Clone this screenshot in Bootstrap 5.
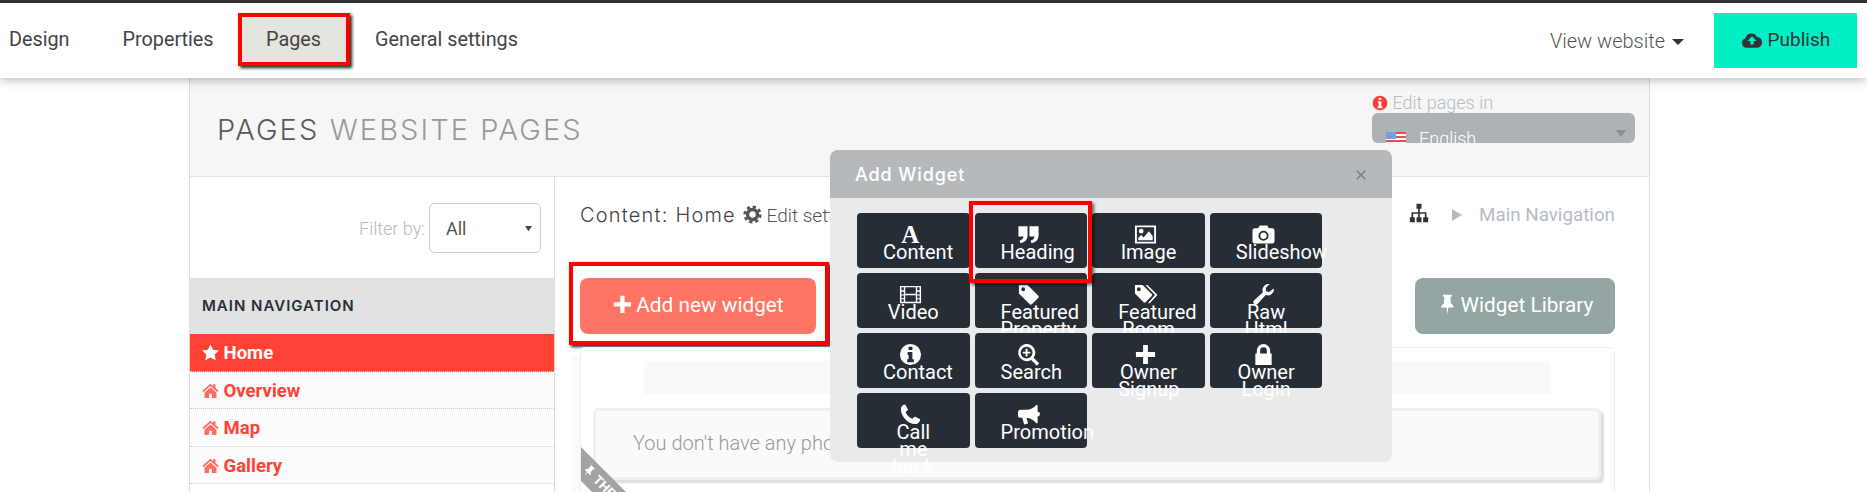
<!DOCTYPE html>
<html lang="en">

<head>
    <meta charset="UTF-8">
    <meta name="viewport" content="width=device-width, initial-scale=1.0">
    <title>Pages</title>
    <link href="https://cdn.jsdelivr.net/npm/bootstrap@5.3.0/dist/css/bootstrap.min.css" rel="stylesheet">
    <style>
        html, body { height: 492px; overflow: hidden; }
        body { font-family: Roboto, sans-serif; background: #fff; color: #444; position: relative; }
        .ico { width: 1em; height: 1em; fill: currentColor; vertical-align: -0.125em; }

        /* top bar */
        .topbar { height: 78px; border-top: 3px solid #333; background: #fff; box-shadow: 0 2px 10px rgba(0,0,0,.28); position: relative; z-index: 5; }
        .topbar .nav-link { color: #444; font-size: 19.8px; padding: 0 26.5px; line-height: 53px; }
        .topbar .nav-item:first-child .nav-link { padding-left: 9px; }
        .topbar .nav-tabs-row { margin-top: 10px; }
        .topbar .nav-link.picked { background: #e5e4de; border: 4px solid #f00; line-height: 45px; padding: 0 24.5px; box-shadow: 2px 2px 3px #222; margin-left: -2.5px; margin-right: -1px; }
        .view-link { color: #555; font-size: 20px; font-weight: 300; margin-right: 30px; }
        .view-link .tri { display: inline-block; border: 6px solid transparent; border-top-color: #333; border-bottom: 0; vertical-align: 3px; margin-left: 7px; }
        .publish { background: #00efc4; color: #333; font-size: 19px; width: 143px; height: 55px; margin-right: 10px; border: 0; border-radius: 0; }
        .publish .ico { font-size: 22px; vertical-align: -5px; }

        /* panel */
        .panel-wrap { margin-left: 189px; width: 1461px; border-left: 1px solid #ddd; border-right: 1px solid #ddd; height: 414px; }
        .panel-head { height: 99px; background: #f6f6f6; border-bottom: 1px solid #e6e6e6; padding-left: 27px; padding-right: 14px; }
        .panel-title { font-family: Inter, sans-serif; font-weight: 300; font-size: 29px; letter-spacing: 2.1px; color: #5a5a5a; margin: 0; padding-top: 35px; }
        .panel-title span { color: #999; }
        .lang-box { width: 263px; margin-top: 14px; }
        .lang-note { font-size: 18px; font-weight: 300; color: #b5bcc5; line-height: 21px; }
        .lang-note .ico { color: #ff3b30; font-size: 16px; }
        .lang-pick { height: 30px; background: #adb2b6; border-radius: 6px; overflow: hidden; color: #fff; font-weight: 300; font-size: 18px; padding: 15px 14px 0; line-height: 21px; position: relative; }
        .lang-pick svg { width: 20px; height: 14px; margin-right: 13px; vertical-align: -1px; }
        .lang-pick .tri { position: absolute; right: 9px; top: 17px; border: 5px solid transparent; border-top: 7px solid #8b8f92; border-bottom: 0; }

        /* sidebar */
        .side { width: 365px; border-right: 1px solid #ddd; flex: none; }
        .filter-row { padding: 26px 13px 25px 0; color: #b5bcc5; font-size: 18px; font-weight: 300; }
        .filter-row select { width: 112px; height: 50px; margin-left: 4px; font-size: 18px; color: #555; padding-left: 16px; border-color: #ccc; font-family: Roboto, sans-serif;
            background-image: url("data:image/svg+xml,%3csvg xmlns='http://www.w3.org/2000/svg' viewBox='0 0 8 8'%3e%3cpath fill='%23444' d='M0 1h8L4 7z'/%3e%3c/svg%3e"); background-size: 7px; background-position: right 8px center; }
        .side-title { background: #e2e2e2; height: 56px; line-height: 56px; padding-left: 12px; font-family: Inter, sans-serif; font-weight: 600; font-size: 15px; letter-spacing: 1px; color: #263038; }
        .side .list-group { border-radius: 0; }
        .side .list-group-item { height: 37.6px; padding: 0 12px; line-height: 38px; font-weight: 700; font-size: 18.5px; color: #ff4136; background: #fcfcfc; border: 0; border-bottom: 1px dotted #ccc; }
        .side .list-group-item .ico { color: #ff6b63; font-size: 17px; }
        .side .list-group-item.active { background: #ff4136; color: #fff; }
        .side .list-group-item.active .ico { color: #fff; }

        /* main column */
        .main-col { flex: 1; padding: 18px 34px 0 25px; min-width: 0; }
        .crumb-row { height: 40px; }
        .content-name { font-family: Inter, sans-serif; font-weight: 300; font-size: 20px; letter-spacing: 1.2px; color: #444; }
        .edit-set { font-size: 19px; font-weight: 300; color: #555; margin-left: 7px; }
        .crumbs { color: #b5bcc5; font-size: 18.8px; }
        .crumbs .map-ico { color: #333; font-size: 20px; margin-right: 23px; }
        .crumbs .tri { display: inline-block; border: 6px solid transparent; border-left: 10px solid #b5bcc5; border-right: 0; margin-right: 17px; }
        .tool-row { margin-top: 43px; }
        .add-btn, .lib-btn { height: 56px; font-size: 20.8px; color: #fff; border: 0; border-radius: 8px; }
        .add-btn .ico, .lib-btn .ico { margin-right: -2px; }
        .add-btn { width: 236px; background: #ff7565; position: relative; }
        .add-btn:hover { background: #ff7565; color: #fff; }
        .lib-btn { width: 200px; background: #95a5a4; }
        .add-mark { position: absolute; left: -11px; right: -13px; top: -16px; bottom: -11px; border: 4px solid #f00; box-shadow: 2px 2px 3px #222; }
        .canvas-box { margin-top: 13px; height: 200px; border: 1px solid #eee; border-radius: 4px; box-shadow: -8px 9px 0 #fafafa; position: relative; background: #fff; padding: 13px 13px 0 12px; }
        .canvas-bar { height: 33px; background: #f9f9f9; margin: 0 50px 14px 51px; }
        .note-card { height: 72px; background: #fafafa; border: 3px solid #f0f0f0; border-radius: 5px; box-shadow: 3px 3px 2px #ddd; padding-left: 37px; line-height: 64px; font-size: 20px; font-weight: 300; color: #999; }
        .ribbon-clip { position: absolute; left: 0; top: 99px; width: 60px; height: 60px; overflow: hidden; }
        .ribbon { position: absolute; left: 0; top: 0; width: 120px; height: 24px; background: #a3a3a3; color: #fff; font-size: 13px; line-height: 24px; padding-left: 16px; transform-origin: top left; transform: rotate(45deg); font-weight: 700; }

        /* widget dialog */
        .widget-dialog { position: absolute; left: 830px; top: 150px; width: 562px; height: 312px; z-index: 3; background: #e9eaec; border: 0; border-radius: 8px; }
        .widget-dialog .modal-header { height: 48px; background: #b5b9bb; border: 0; padding: 0 25px; border-radius: 8px 8px 0 0; }
        .widget-dialog .modal-title { font-family: Inter, sans-serif; font-weight: 500; font-size: 18px; letter-spacing: .9px; color: #fff; }
        .widget-dialog .btn-close { font-size: 12px; margin: 1px 0 0 auto; opacity: .3; }
        .widget-grid { position: relative; padding: 15px 0 0 27px; display: flex; flex-wrap: wrap; gap: 5px; width: 500px; }
        .widget-btn { width: 112.6px; height: 55px; background: #262d35; color: #fff; border-radius: 4px; padding: 13px 26px 0; font-size: 20px; line-height: 17.7px; text-align: center; }
        .widget-btn .ico { display: block; width: 23px; height: 23px; margin: -3px 0 -2.3px 16px; }
        .widget-btn .serif-a { display: block; font-family: "Liberation Serif", serif; font-weight: 700; font-size: 25px; line-height: 17.7px; position: relative; left: -3px; }
        .heading-mark { position: absolute; left: 139px; top: 3px; width: 123px; height: 82px; border: 4.5px solid #f00; box-shadow: 2px 2px 3px rgba(0,0,0,.6); }
    </style>
</head>

<body>
    <!-- icons -->
    <svg width="0" height="0" class="position-absolute">
        <symbol id="i-star" viewBox="0 0 24 24"><path d="M12 .5l3.500 7.500 8.300 1.100-6 5.700 1.500 8.200L12 19l-7.300 4 1.500-8.200-6-5.700L8.500 8z"/></symbol>
        <symbol id="i-home" viewBox="0 0 24 24"><path d="M12 2.500L.5 12.400l1.600 1.900L12 5.800l9.900 8.500 1.600-1.900-4.500-3.800V3h-3.200v2.600z M12 7.800L3.500 15v7.500H10v-6h4v6h6.500V15z"/></symbol>
        <symbol id="i-plus" viewBox="0 0 24 24"><path d="M9.500 2h5v7.500H22v5h-7.500V22h-5v-7.500H2v-5h7.500z"/></symbol>
        <symbol id="i-cloud" viewBox="0 0 24 24"><path fill-rule="evenodd" d="M6 20.500a5.200 5.200 0 0 1-1.200-10.200A6.700 6.700 0 0 1 17.400 8.600 6 6 0 0 1 18 20.500z M12 8l-5 5.200h3.200V17h3.600v-3.800H17z"/></symbol>
        <symbol id="i-info" viewBox="0 0 24 24"><path fill-rule="evenodd" d="M12 1a11 11 0 1 0 0 22 11 11 0 0 0 0-22z M10 4h4v3.400h-4z M9 9.500h5V17h1.500v3h-7v-3H10v-4.500H9z"/></symbol>
        <symbol id="i-cog" viewBox="0 0 24 24"><circle cx="12" cy="12" r="6.300" fill="none" stroke="currentColor" stroke-width="4.400"/><circle cx="12" cy="12" r="9.800" fill="none" stroke="currentColor" stroke-width="3.400" stroke-dasharray="4 3.700"/></symbol>
        <symbol id="i-map" viewBox="0 0 24 24"><path d="M9 1h6v6h-6z M1 17h6v6H1z M9 17h6v6H9z M17 17h6v6h-6z M11 7h2v4h8v6h-2v-4h-6v4h-2v-4H5v4H3v-6h8z"/></symbol>
        <symbol id="i-pin" viewBox="0 0 24 24"><path d="M7 1h10v2.200h-1.500L16 11c2 1 3.200 2.700 3.200 4.600H13l-1 8-1-8H4.800c0-1.900 1.200-3.600 3.200-4.600l.5-7.800H7z"/></symbol>
        <symbol id="i-quote" viewBox="0 0 24 24"><path d="M1.500 3.500H11v9.300c0 4.700-3 7.700-7.400 8.200l-.8-2.800c2.500-.6 3.800-1.900 4-4.200H1.500z M13 3.500h9.500v9.300c0 4.700-3 7.700-7.400 8.200l-.8-2.800c2.500-.6 3.800-1.900 4-4.200H13z"/></symbol>
        <symbol id="i-image" viewBox="0 0 24 24"><path fill-rule="evenodd" d="M1 2.500h22v19H1z M3 4.500v15h18v-15z M7.500 6a2.500 2.500 0 1 1 0 5 2.500 2.500 0 0 1 0-5z M4.500 18v-2.500l3-3 2.500 2.500 5.500-6.500 4 5v4.500z"/></symbol>
        <symbol id="i-camera" viewBox="0 0 24 24"><path fill-rule="evenodd" d="M8 2.500h8l1.500 3H21a2.500 2.500 0 0 1 2.500 2.500v11a2.500 2.500 0 0 1-2.500 2.500H3A2.500 2.500 0 0 1 .5 19V8A2.500 2.500 0 0 1 3 5.500h3.500z M12 8a5.300 5.300 0 1 0 0 10.600A5.300 5.300 0 0 0 12 8z M12 10a3.300 3.300 0 1 1 0 6.600 3.300 3.300 0 0 1 0-6.600z"/></symbol>
        <symbol id="i-film" viewBox="0 0 24 24"><path fill-rule="evenodd" d="M1 3h22v18H1z M2.500 4.500v3H5v-3z M2.500 9v3H5V9z M2.500 13v3H5v-3z M2.500 17v2.500H5V17z M19 4.500v3h2.500v-3z M19 9v3h2.500V9z M19 13v3h2.500v-3z M19 17v2.500h2.500V17z M6.500 4.500v6.700h11V4.500z M6.500 12.800v6.700h11v-6.700z"/></symbol>
        <symbol id="i-tag" viewBox="0 0 24 24"><path fill-rule="evenodd" d="M2 2h9l11.300 11.300a1.500 1.500 0 0 1 0 2.100l-6.900 6.900a1.500 1.500 0 0 1-2.100 0L2 11z M6.500 4.500a2 2 0 1 0 0 4 2 2 0 0 0 0-4z"/></symbol>
        <symbol id="i-tags" viewBox="0 0 24 24"><path fill-rule="evenodd" d="M1 2h8l9.500 9.500a1.500 1.500 0 0 1 0 2.100l-6.400 6.400a1.500 1.500 0 0 1-2.100 0L1 11z M5 4.500a2 2 0 1 0 0 4 2 2 0 0 0 0-4z"/><path d="M12 2h2l9.500 9.500a1.500 1.500 0 0 1 0 2.100L16.500 21h-2l7.400-8.400z"/></symbol>
        <symbol id="i-wrench" viewBox="0 0 24 24"><path d="M23 6.500a6.500 6.500 0 0 1-8.700 6.100L5.800 22a2.700 2.700 0 0 1-3.800-3.800l9.400-8.500A6.500 6.500 0 0 1 18.500 1l-4 4v3.500l3.500 1 4-3.500z"/></symbol>
        <symbol id="i-search" viewBox="0 0 24 24"><path fill-rule="evenodd" d="M10 1a9 9 0 0 1 7.300 14.300l5.900 5.900-2.500 2.500-5.900-5.900A9 9 0 1 1 10 1z M10 3.800a6.200 6.200 0 1 0 0 12.400 6.200 6.200 0 0 0 0-12.400z M9 6h2v3h3v2h-3v3H9v-3H6V9h3z"/></symbol>
        <symbol id="i-lock" viewBox="0 0 24 24"><path fill-rule="evenodd" d="M12 1a7 7 0 0 1 7 7v3h1.500v12h-17V11H5V8a7 7 0 0 1 7-7z M12 4.500A3.500 3.500 0 0 0 8.500 8v3h7V8A3.500 3.500 0 0 0 12 4.500z"/></symbol>
        <symbol id="i-phone" viewBox="0 0 24 24"><path d="M6.500 1.500l3 5.500-2.500 2.500c.8 3 3.700 6 7 7l2.500-2.500 5.500 3c0 2.500-2 5-5 5C9 22 2 14 2 6.500c0-3 2-5 4.500-5z"/></symbol>
        <symbol id="i-horn" viewBox="0 0 24 24"><path d="M20 2h1.500v7a2.500 2.500 0 0 1 0 5v7H20c-2.500-3-6-5-10-5.500l1.500 6-4 1-2-7H4a3 3 0 0 1-3-3V10a3 3 0 0 1 3-3h6c4 0 7.500-2 10-5z"/></symbol>
    </svg>

    <nav class="topbar d-flex justify-content-between">
        <ul class="nav nav-tabs-row">
            <li class="nav-item"><a class="nav-link" href="#">Design</a></li>
            <li class="nav-item"><a class="nav-link" href="#">Properties</a></li>
            <li class="nav-item"><a class="nav-link picked" href="#">Pages</a></li>
            <li class="nav-item"><a class="nav-link" href="#">General settings</a></li>
        </ul>
        <div class="d-flex align-items-center">
            <span class="view-link">View website<span class="tri"></span></span>
            <button class="btn publish"><svg class="ico"><use href="#i-cloud"/></svg> Publish</button>
        </div>
    </nav>

    <div class="panel-wrap">
        <div class="panel-head d-flex justify-content-between align-items-start">
            <h1 class="panel-title">PAGES <span>WEBSITE PAGES</span></h1>
            <div class="lang-box">
                <div class="lang-note"><svg class="ico"><use href="#i-info"/></svg> Edit pages in</div>
                <div class="lang-pick">
                    <svg viewBox="0 0 20 14"><rect width="20" height="14" fill="#fff"/><path fill="#e0524f" d="M0 0h20v2H0zM0 4h20v2H0zM0 8h20v2H0zM0 12h20v2H0z"/><rect width="10" height="7" fill="#7a9ce0"/></svg>English<span class="tri"></span>
                </div>
            </div>
        </div>

        <div class="d-flex">
            <div class="side">
                <div class="filter-row d-flex justify-content-end align-items-center">
                    <span>Filter by:</span>
                    <select class="form-select"><option>All</option></select>
                </div>
                <div class="side-title">MAIN NAVIGATION</div>
                <div class="list-group">
                    <a href="#" class="list-group-item active"><svg class="ico"><use href="#i-star"/></svg> Home</a>
                    <a href="#" class="list-group-item"><svg class="ico"><use href="#i-home"/></svg> Overview</a>
                    <a href="#" class="list-group-item"><svg class="ico"><use href="#i-home"/></svg> Map</a>
                    <a href="#" class="list-group-item"><svg class="ico"><use href="#i-home"/></svg> Gallery</a>
                </div>
            </div>

            <div class="main-col">
                <div class="crumb-row d-flex justify-content-between align-items-center">
                    <div><span class="content-name">Content: Home</span><span class="edit-set"><svg class="ico"><use href="#i-cog"/></svg> Edit settings</span></div>
                    <div class="crumbs"><svg class="ico map-ico"><use href="#i-map"/></svg><span class="tri"></span>Main Navigation</div>
                </div>
                <div class="tool-row d-flex justify-content-between">
                    <button class="btn add-btn"><svg class="ico"><use href="#i-plus"/></svg> Add new widget<span class="add-mark"></span></button>
                    <button class="btn lib-btn"><svg class="ico"><use href="#i-pin"/></svg> Widget Library</button>
                </div>
                <div class="canvas-box">
                    <div class="canvas-bar"></div>
                    <div class="note-card">You don't have any photos yet</div>
                    <div class="ribbon-clip"><div class="ribbon"><svg class="ico"><use href="#i-pin"/></svg> THEME</div></div>
                </div>
            </div>
        </div>
    </div>

    <div class="modal-content widget-dialog">
        <div class="modal-header">
            <h5 class="modal-title">Add Widget</h5>
            <button type="button" class="btn-close" aria-label="Close"></button>
        </div>
        <div class="widget-grid">
            <div class="widget-btn"><span class="serif-a">A</span>Content</div>
            <div class="widget-btn"><svg class="ico"><use href="#i-quote"/></svg>Heading</div>
            <div class="widget-btn"><svg class="ico"><use href="#i-image"/></svg>Image</div>
            <div class="widget-btn"><svg class="ico"><use href="#i-camera"/></svg>Slideshow</div>
            <div class="widget-btn"><svg class="ico"><use href="#i-film"/></svg>Video</div>
            <div class="widget-btn"><svg class="ico"><use href="#i-tag"/></svg>Featured Property</div>
            <div class="widget-btn"><svg class="ico"><use href="#i-tags"/></svg>Featured Room</div>
            <div class="widget-btn"><svg class="ico"><use href="#i-wrench"/></svg>Raw Html</div>
            <div class="widget-btn"><svg class="ico"><use href="#i-info"/></svg>Contact</div>
            <div class="widget-btn"><svg class="ico"><use href="#i-search"/></svg>Search</div>
            <div class="widget-btn"><svg class="ico"><use href="#i-plus"/></svg>Owner Signup</div>
            <div class="widget-btn"><svg class="ico"><use href="#i-lock"/></svg>Owner Login</div>
            <div class="widget-btn"><svg class="ico"><use href="#i-phone"/></svg>Call me back</div>
            <div class="widget-btn"><svg class="ico"><use href="#i-horn"/></svg>Promotion</div>
            <span class="heading-mark"></span>
        </div>
    </div>

    <script src="https://cdn.jsdelivr.net/npm/bootstrap@5.3.0/dist/js/bootstrap.bundle.min.js"></script>
</body>

</html>
